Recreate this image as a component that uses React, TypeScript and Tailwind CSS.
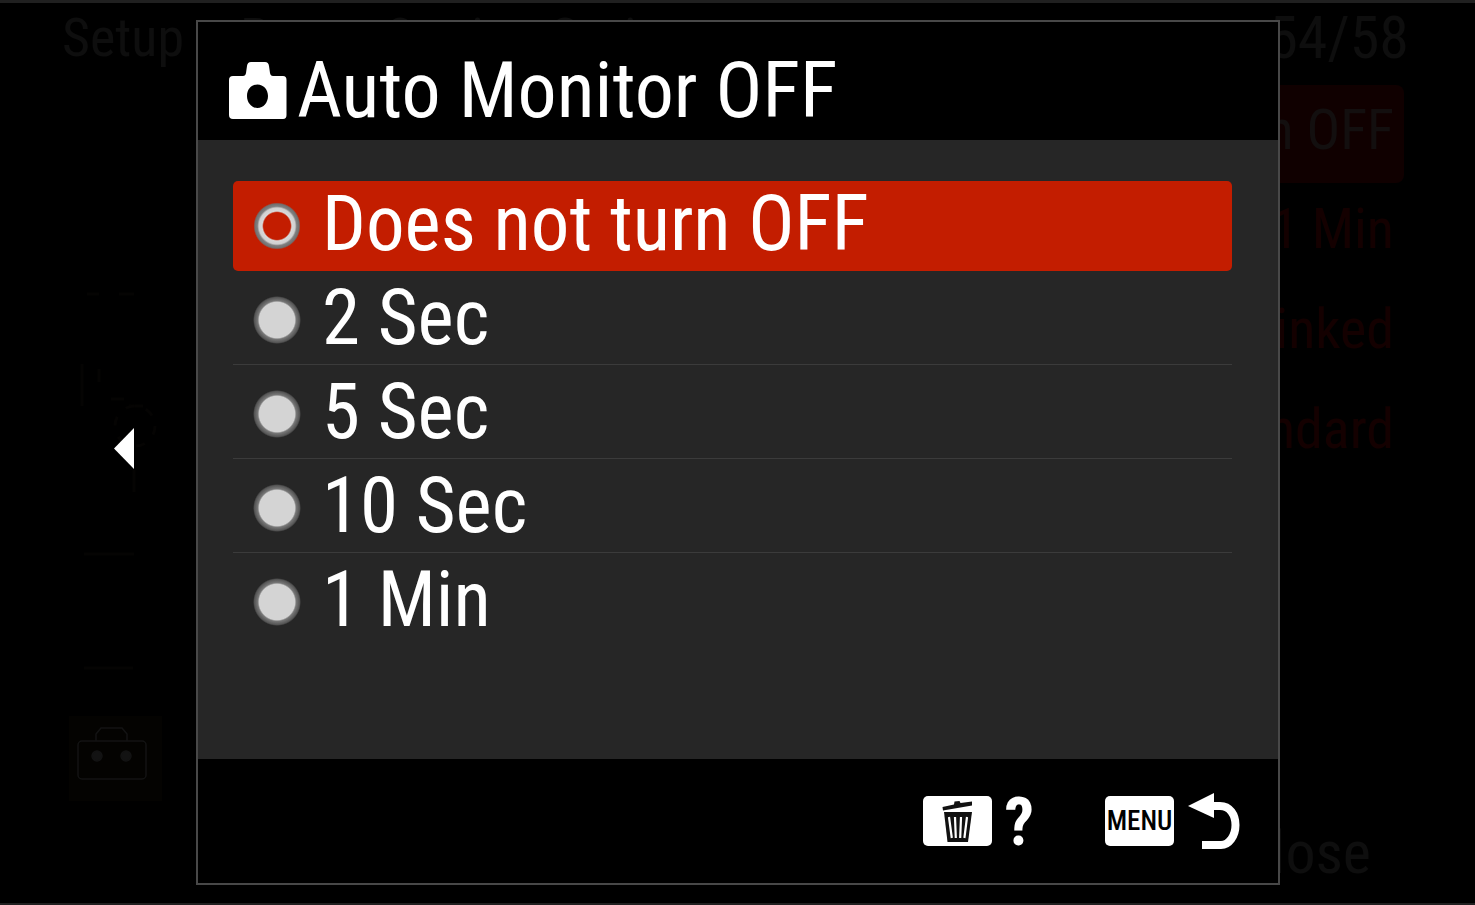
import { useState } from "react";

const OPTIONS = ["Does not turn OFF", "2 Sec", "5 Sec", "10 Sec", "1 Min"];

function CameraIcon() {
  return (
    <svg viewBox="0 0 58 57" className="h-[57px] w-[58px] shrink-0" aria-hidden="true">
      <path
        fill="#fff"
        fillRule="evenodd"
        d="M4 14H14Q16.500 14 17 11L18 4Q18.500 0 22 0H36Q39.500 0 40 4L41 11Q41.500 14 44 14H54Q57.500 14 57.500 18V53Q57.500 57 54 57H4Q0 57 0 53V18Q0 14 4 14ZM28.500 22.500C22.500 22.500 18 27.500 18 34C18 40.500 22.500 46 28.500 46C34.500 46 39 40.500 39 34C39 27.500 34.500 22.500 28.500 22.500Z"
      />
    </svg>
  );
}

function TrashIcon() {
  return (
    <svg viewBox="0 0 69 50" className="h-[50px] w-[69px]" aria-hidden="true">
      <path d="M19.500 11L31 8.500L31.500 5.500L36.500 5L37.500 7L49 5.500V9.500L20 14.500Z" fill="#111" />
      <path d="M21 16H49L45 46H24.500Z" fill="#111" />
      <path d="M26 21L28.800 42M32 21L32.800 42M38 21L37.200 42M44 21L41.400 42" stroke="#fff" strokeWidth="2.200" />
    </svg>
  );
}

function ReturnIcon() {
  return (
    <svg viewBox="0 0 52 57" className="h-[57px] w-[52px]" aria-hidden="true">
      <path d="M0 13L26 0V25Z" fill="#fff" />
      <path d="M24 13H32C42 13 47.500 22 47.500 32C47.500 43 41 52 33 52H14" fill="none" stroke="#fff" strokeWidth="8" />
    </svg>
  );
}

function ToolboxIcon() {
  return (
    <svg viewBox="0 0 70 54" className="h-[54px] w-[70px]" fill="none" stroke="#131313" strokeWidth="1.500" aria-hidden="true">
      <rect x="1" y="14" width="68" height="38" rx="4" />
      <path d="M19 14V7L24 1H45L50 7V14" />
      <circle cx="20" cy="29" r="5" fill="#131313" />
      <circle cx="49" cy="29" r="5" fill="#131313" />
    </svg>
  );
}

function SettingsPage() {
  return (
    <div className="flex min-h-screen flex-col" aria-hidden="true">
      <div className="flex h-[85px] justify-between pl-[62px] pr-[66px] leading-[76px] text-[#0e0e0e]">
        <div className="flex items-start gap-[56px] text-[54px]">
          <span>Setup</span>
          <span>Power Setting Option</span>
        </div>
        <span className="text-[60px]">54/58</span>
      </div>
      <div className="flex flex-1">
        <div className="flex w-[196px] flex-col items-start pl-[69px]">
          <svg viewBox="0 0 90 420" className="mt-[205px] h-[420px] w-[90px]" fill="none" stroke="#050403" strokeWidth="3" aria-hidden="true">
            <path d="M18 4H30M50 4H65M13 74V116M30 79V92M42 109H55M60 116H74M65 180V202M15 264H65M15 378H64" />
            <circle cx="66" cy="136" r="20" strokeDasharray="9 12" />
          </svg>
          <div className="mt-[6px] flex h-[85px] w-[93px] justify-center bg-[#040301] pr-2 pt-[11px]">
            <ToolboxIcon />
          </div>
        </div>
        <div className="flex flex-1 flex-col pr-[71px] text-right text-[56px] text-[#140000]">
          <div className="h-[98px] rounded-lg bg-[#100000] pr-[10px] leading-[90px] text-[#130f0f]">Does not turn OFF</div>
          <div className="h-[100px] pr-[10px] leading-[92px]">1 Min</div>
          <div className="h-[100px] pr-[10px] leading-[92px]">Both Linked</div>
          <div className="h-[100px] pr-[10px] leading-[92px]">Standard</div>
        </div>
      </div>
      <div className="h-0">
        <div className="-mt-[90px] pr-[104px] text-right text-[60px] leading-[76px] text-[#0e0e0e]">Close</div>
      </div>
    </div>
  );
}

export default function App() {
  const [selected, setSelected] = useState(OPTIONS[0]);

  return (
    <main className="relative min-h-screen overflow-hidden bg-black font-['Liberation_Sans_Narrow','Roboto_Condensed','Liberation_Sans',sans-serif] text-white">
      <SettingsPage />
      <div className="absolute inset-0 flex border-b-2 border-t-[3px] border-[#202020] pb-[18px] pr-[195px] pt-[17px]">
        <div className="flex w-[196px] items-center justify-end pb-2 pr-[62px]">
          <button type="button" aria-label="Previous">
            <svg viewBox="0 0 20 41" className="h-[41px] w-[20px]" aria-hidden="true">
              <path d="M0 20.500L20 0V41Z" fill="#fff" />
            </svg>
          </button>
        </div>

        <section role="dialog" aria-labelledby="dialog-title" className="flex flex-1 flex-col border-2 border-[#484848] bg-[#262626]">
          <header className="flex h-[118px] items-center gap-[10px] bg-black pl-[31px] pt-[18px]">
            <CameraIcon />
            <h1 id="dialog-title" className="whitespace-nowrap pt-[2px] text-[78px] leading-[88px]">Auto Monitor OFF</h1>
          </header>

          <ul className="flex-1 pl-[35px] pr-[46px] pt-[37px]">
            {OPTIONS.map((option, index) => (
              <li
                key={option}
                className={
                  index === 0 || index === OPTIONS.length - 1
                    ? "h-[94px] pt-1"
                    : "h-[94px] border-b border-[#3b3b3b] pt-1"
                }
              >
                <label
                  className={
                    option === selected
                      ? "flex h-full items-center gap-[21px] rounded-[5px] bg-[#c31d00] pl-5"
                      : "flex h-full items-center gap-[21px] pl-5"
                  }
                >
                  <input
                    type="radio"
                    name="auto-monitor-off"
                    checked={option === selected}
                    onChange={() => setSelected(option)}
                    className="size-[48px] shrink-0 appearance-none rounded-full bg-[radial-gradient(circle_closest-side,#d4d4d4_0,#d4d4d4_74%,#777777_80%,#555555_94%,#262626_100%)] checked:bg-[radial-gradient(circle_closest-side,#c31d00_0,#c31d00_56%,#d8d8d8_62%,#d0d0d0_75%,#808080_82%,#707070_92%,#c31d00_98%)]"
                  />
                  <span className="whitespace-nowrap pb-1 text-[77px] leading-[84px]">{option}</span>
                </label>
              </li>
            ))}
          </ul>

          <footer className="flex h-[124px] items-center justify-end gap-[71px] bg-black pr-[38px]">
            <button type="button" aria-label="Help" className="flex items-center gap-3">
              <span className="rounded-[5px] bg-white">
                <TrashIcon />
              </span>
              <span className="pt-1 text-[66px] font-bold leading-[66px]">?</span>
            </button>
            <button type="button" aria-label="Menu, back" className="flex items-center gap-[14px]">
              <span className="flex h-[50px] w-[69px] items-center justify-center rounded-[5px] bg-white text-[27px] font-medium leading-[50px] text-black">
                MENU
              </span>
              <ReturnIcon />
            </button>
          </footer>
        </section>
      </div>
    </main>
  );
}
